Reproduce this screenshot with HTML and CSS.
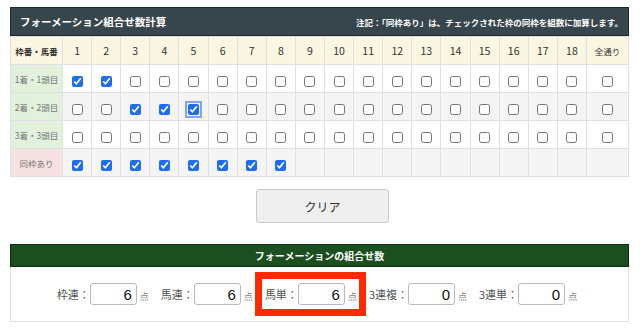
FILE: index.html
```html
<!DOCTYPE html>
<html lang="ja">
<head>
  <meta charset="UTF-8" />
  <meta name="viewport" content="width=device-width, initial-scale=1.0" />
  <title>フォーメーション組合せ数計算</title>
  <link rel="stylesheet" href="styles.css">
</head>
<body>
  <div class="wrap">
    <div class="title-bar">
      <span class="title">フォーメーション組合せ数計算</span>
      <span class="note">注記：「同枠あり」は、チェックされた枠の同枠を組数に加算します。</span>
    </div>
    <table class="grid">
      <colgroup>
        <col class="c-head" />
        <col span="18" />
        <col class="c-all" />
      </colgroup>
      <thead id="grid-head"></thead>
      <tbody id="grid-body"></tbody>
    </table>

    <button class="btn-clear">クリア</button>

    <div class="result">
      <div class="result-head">フォーメーションの組合せ数</div>
      <div class="result-body">
        <div class="item"><span class="lbl">枠連：</span><input class="num" value="6" /><span class="pt">点</span></div>
        <div class="item"><span class="lbl">馬連：</span><input class="num" value="6" /><span class="pt">点</span></div>
        <div class="item mark"><span class="lbl">馬単：</span><input class="num" value="6" /><span class="pt">点</span></div>
        <div class="item"><span class="lbl">3連複：</span><input class="num" value="0" /><span class="pt">点</span></div>
        <div class="item"><span class="lbl">3連単：</span><input class="num" value="0" /><span class="pt">点</span></div>
      </div>
    </div>
  </div>

  <script>
    const rows = [
      { name: "1着・1頭目", cls: "lab-g", on: [1, 2] },
      { name: "2着・2頭目", cls: "lab-g", on: [3, 4, 5] },
      { name: "3着・3頭目", cls: "lab-g", on: [] },
      { name: "同枠あり", cls: "lab-p", on: [1, 2, 3, 4, 5, 6, 7, 8], waku: true }
    ];

    let head = "<tr><th class='corner'>枠番・馬番</th>";
    for (let i = 1; i <= 18; i++) head += `<th>${i}</th>`;
    head += "<th class='all'>全通り</th></tr>";
    document.getElementById("grid-head").innerHTML = head;

    let body = "";
    rows.forEach((r, ri) => {
      body += `<tr><td class="${r.cls}">${r.name}</td>`;
      for (let i = 1; i <= 18; i++) {
        if (r.waku && i > 8) { body += "<td></td>"; continue; }
        const chk = r.on.includes(i) ? "checked" : "";
        const focus = ri === 1 && i === 5 ? "focus" : "";
        body += `<td><input type="checkbox" class="${focus}" ${chk} /></td>`;
      }
      body += r.waku ? "<td></td>" : "<td><input type='checkbox' /></td>";
      body += "</tr>";
    });
    document.getElementById("grid-body").innerHTML = body;
  </script>
</body>
</html>
```

FILE: styles.css
```css
body {
  margin: 0;
  background: #fff;
  font-family: "Noto Sans CJK JP", "Noto Sans", sans-serif;
  color: #333;
}
.wrap {
  width: 619px;
  margin: 7px 0 0 10px;
}
.title-bar {
  display: flex;
  align-items: center;
  justify-content: space-between;
  height: 27px;
  padding: 0 5px 0 9px;
  background: #37464d;
  border: 1px solid #1f2a2f;
}
.title {
  color: #fff;
  font-weight: bold;
  font-size: 10.5px;
}
.note {
  color: #fff;
  font-weight: bold;
  font-size: 8.5px;
}
.grid {
  width: 619px;
  border-collapse: collapse;
  table-layout: fixed;
}
.c-head {
  width: 52px;
}
.c-all {
  width: 42px;
}
.grid th,
.grid td {
  border: 1px solid #e0e0e0;
  height: 27px;
  padding: 0;
  text-align: center;
}
.grid th {
  background: #faf6e1;
  font-size: 10.5px;
  font-weight: normal;
  color: #333;
}
.grid th.corner {
  font-size: 8.5px;
  font-weight: bold;
}
.grid th.all {
  font-size: 8.5px;
}
.grid tbody tr:nth-child(even) td {
  background: #f4f4f4;
}
.grid td.lab-g {
  background: #e1f1dc !important;
  font-size: 8.5px;
  color: #777;
}
.grid td.lab-p {
  background: #f6e2e2 !important;
  font-size: 8.5px;
  color: #777;
}
input[type="checkbox"] {
  width: 11px;
  height: 11px;
  margin: 0;
  vertical-align: middle;
  accent-color: #1e6cf0;
}
input[type="checkbox"].focus {
  outline: 2px solid #7fa6ee;
  outline-offset: 1px;
  border-radius: 2px;
}
.btn-clear {
  display: block;
  width: 133px;
  height: 34px;
  margin: 12px 0 0 246px;
  background: #efefef;
  border: 1px solid #c8c8c8;
  border-radius: 3px;
  font-family: inherit;
  font-size: 12px;
  color: #333;
}
.result {
  margin-top: 21px;
}
.result-head {
  height: 21px;
  line-height: 21px;
  background: #1c4f1f;
  border: 1px solid #0f2f11;
  color: #fff;
  font-weight: bold;
  font-size: 10px;
  text-align: center;
}
.result-body {
  display: flex;
  justify-content: center;
  align-items: center;
  gap: 12px;
  height: 54px;
  padding-right: 5px;
  border: 1px solid #e2e2e2;
  border-top: none;
}
.item {
  display: flex;
  align-items: center;
}
.item.mark {
  padding: 4px 2px 4px 3px;
  margin: 0 -2px 0 -3px;
  outline: 7px solid #ff2a00;
}
.lbl {
  font-size: 11px;
  color: #555;
}
.num {
  box-sizing: border-box;
  width: 47px;
  height: 22px;
  padding: 0 4px 0 0;
  margin: 0;
  border: 1px solid #bbb;
  border-radius: 3px;
  text-align: right;
  font-family: "Liberation Sans", sans-serif;
  font-size: 15px;
  color: #111;
}
.pt {
  font-size: 9px;
  color: #888;
  margin: 5px 0 0 3px;
}
```
